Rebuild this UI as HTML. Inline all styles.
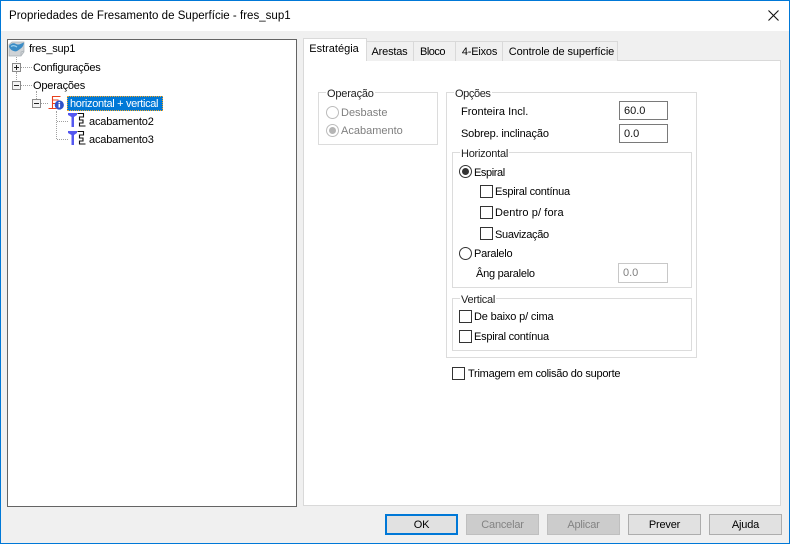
<!DOCTYPE html>
<html>
<head>
<meta charset="utf-8">
<style>
html,body{margin:0;padding:0;width:790px;height:544px;overflow:hidden;background:#f0f0f0;font-family:"Liberation Sans",sans-serif;font-size:11px;letter-spacing:-.2px;color:#000}
div,span,svg{position:absolute;box-sizing:border-box}
.t{white-space:nowrap;line-height:14px;height:14px;margin-top:1px}
.g{color:#7f7f7f}
.gb{border:1px solid #dcdcdc}
.l{background:#fff;padding:0 1px;white-space:nowrap;line-height:14px;height:14px;color:#222;margin-top:1px}
.tab{top:41px;height:20px;background:#f0f0f0;border:1px solid #d9d9d9;border-bottom:none;line-height:21px;text-align:center;white-space:nowrap}
.cb{width:13px;height:13px;background:#fff;border:1px solid #333}
.rd{width:13px;height:13px;border-radius:50%;background:#fff;border:1px solid #333}
.rd.dis{border-color:#bcbcbc}
.dot{width:7px;height:7px;left:2px;top:2px;border-radius:50%;background:#333}
.inp{background:#fff;border:1px solid #7a7a7a;line-height:19px;padding-left:4px;color:#111;letter-spacing:0}
.btn{top:514px;width:73px;height:21px;background:#e1e1e1;border:1px solid #adadad;text-align:center;line-height:21px}
.btn.dis{background:#ccc;border-color:#bfbfbf;color:#838383}
.dv{border-left:1px dotted #a0a0a0;width:1px}
.dh{border-top:1px dotted #a0a0a0;height:1px}
.exp{width:9px;height:9px;background:#f4f4f4;border:1px solid #8a8a8a}
.exp i{position:absolute;left:1px;top:3px;width:5px;height:1px;background:#222}
.exp b{position:absolute;left:3px;top:1px;width:1px;height:5px;background:#222}
</style>
</head>
<body>
<div style="left:0;top:0;width:790px;height:544px;border:1px solid #0078d7;background:#f0f0f0"></div>
<div style="left:1px;top:1px;width:788px;height:30px;background:#fff"></div>
<div class="t" style="left:9px;top:8px;font-size:11.5px;letter-spacing:.02px">Propriedades de Fresamento de Superfície - fres_sup1</div>
<svg style="left:768px;top:10px" width="11" height="11" viewBox="0 0 11 11"><path d="M.5.5l10 10M10.500.5l-10 10" stroke="#111" stroke-width="1.1" fill="none"/></svg>

<!-- tree -->
<div style="left:7px;top:39px;width:290px;height:468px;background:#fff;border:1px solid #646464"></div>
<svg style="left:8px;top:41px" width="17" height="16" viewBox="0 0 17 16">
<path d="M1 3.500L4 1h12v10l-3 4H1z" fill="#cfd3d6" stroke="#a9b0b5" stroke-width=".7"/>
<path d="M13 15V11l3-1" stroke="#a9b0b5" stroke-width=".7" fill="none"/>
<path d="M1 5C2.500 2.500 5.500 1.500 8 3c2.500 1.500 5-.5 8-1.500-.5 3-1.500 5-4 6.500-2 1.300-3 2.800-5.500 2.300C4 9.800 1.500 8 1 5z" fill="#3a8cc6"/>
<path d="M3 5.500c2-1.500 4-1 6 .5" stroke="#9bd0ee" stroke-width="1.200" fill="none"/>
</svg>
<div class="t" style="left:29px;top:41px;letter-spacing:-.25px">fres_sup1</div>
<div class="dv" style="left:16px;top:57px;height:7px"></div>
<div class="dv" style="left:16px;top:72px;height:10px"></div>
<div class="dh" style="left:21px;top:67px;width:11px"></div>
<div class="dh" style="left:21px;top:85px;width:11px"></div>
<div class="exp" style="left:12px;top:63px"><i></i><b></b></div>
<div class="exp" style="left:12px;top:81px"><i></i></div>
<div class="t" style="left:33px;top:60px;letter-spacing:-.27px">Configurações</div>
<div class="t" style="left:33px;top:78px">Operações</div>
<div class="dv" style="left:36px;top:91px;height:8px"></div>
<div class="dh" style="left:41px;top:103px;width:7px"></div>
<div class="exp" style="left:32px;top:99px"><i></i></div>
<svg style="left:48px;top:95px" width="18" height="16" viewBox="0 0 18 16">
<path d="M.5 13.500h8M4.500 13V1.500h8M4.500 5h6M4.500 8.500h7" stroke="#e8401c" stroke-width="1.100" fill="none"/>
<circle cx="11.300" cy="10" r="4.600" fill="#2f52c8"/><rect x="10.500" y="9" width="1.600" height="3.500" fill="#fff"/><rect x="10.500" y="7" width="1.600" height="1.300" fill="#fff"/>
</svg>
<div style="left:67px;top:96px;width:96px;height:15px;background:#0078d7;outline:1px dotted #f5a623;outline-offset:-1px"></div>
<div class="t" style="left:70px;top:96px;color:#fff;letter-spacing:-.33px">horizontal + vertical</div>
<div class="dv" style="left:56px;top:111px;height:28px"></div>
<div class="dh" style="left:57px;top:121px;width:11px"></div>
<div class="dh" style="left:57px;top:139px;width:11px"></div>
<svg style="left:68px;top:112px" width="19" height="16" viewBox="0 0 19 16">
<path d="M0 1h9v2L6 5V15H3.500V5L0 3z" fill="#5458f0"/>
<path d="M9.500 1.500h6v3.500h-4v3h3.500v3h-3.500v3h6" stroke="#111" stroke-width="1.100" fill="none"/>
</svg>
<svg style="left:68px;top:130px" width="19" height="16" viewBox="0 0 19 16">
<path d="M0 1h9v2L6 5V15H3.500V5L0 3z" fill="#5458f0"/>
<path d="M9.500 1.500h6v3.500h-4v3h3.500v3h-3.500v3h6" stroke="#111" stroke-width="1.100" fill="none"/>
</svg>
<div class="t" style="left:89px;top:114px;letter-spacing:-.18px">acabamento2</div>
<div class="t" style="left:89px;top:132px;letter-spacing:-.18px">acabamento3</div>

<!-- tabs -->
<div style="left:303px;top:60px;width:478px;height:446px;background:#fff;border:1px solid #d9d9d9"></div>
<div class="tab" style="left:366px;width:48px;padding-right:1px">Arestas</div>
<div class="tab" style="left:413px;width:43px;letter-spacing:-.5px;padding-right:4px">Bloco</div>
<div class="tab" style="left:455px;width:48px;padding-left:1px">4-Eixos</div>
<div class="tab" style="left:502px;width:116px;letter-spacing:-.1px;padding-left:3px">Controle de superfície</div>
<div class="tab" style="left:303px;top:38px;width:64px;height:23px;background:#fff;line-height:21px;letter-spacing:0;padding-right:2px">Estratégia</div>

<!-- Operacao -->
<div class="gb" style="left:318px;top:92px;width:120px;height:53px"></div>
<div class="l" style="left:326px;top:86px">Operação</div>
<div class="rd dis" style="left:326px;top:106px"></div>
<div class="t g" style="left:341px;top:105px;letter-spacing:0">Desbaste</div>
<div class="rd dis" style="left:326px;top:124px"><div class="dot" style="background:#b5b5b5"></div></div>
<div class="t g" style="left:341px;top:123px;letter-spacing:0">Acabamento</div>

<!-- Opcoes -->
<div class="gb" style="left:446px;top:92px;width:251px;height:266px"></div>
<div class="l" style="left:454px;top:86px;letter-spacing:-.4px">Opções</div>
<div class="t" style="left:461px;top:104px;letter-spacing:0">Fronteira Incl.</div>
<div class="inp" style="left:619px;top:101px;width:49px;height:19px">60.0</div>
<div class="t" style="left:461px;top:126px;letter-spacing:-.15px">Sobrep. inclinação</div>
<div class="inp" style="left:619px;top:124px;width:49px;height:19px">0.0</div>

<!-- Horizontal -->
<div class="gb" style="left:452px;top:152px;width:240px;height:136px"></div>
<div class="l" style="left:460px;top:146px;letter-spacing:-.25px">Horizontal</div>
<div class="rd" style="left:459px;top:165px"><div class="dot"></div></div>
<div class="t" style="left:474px;top:165px;letter-spacing:-.4px">Espiral</div>
<div class="cb" style="left:480px;top:185px"></div>
<div class="t" style="left:495px;top:184px;letter-spacing:-.25px">Espiral contínua</div>
<div class="cb" style="left:480px;top:206px"></div>
<div class="t" style="left:495px;top:205px;letter-spacing:.1px">Dentro p/ fora</div>
<div class="cb" style="left:480px;top:227px"></div>
<div class="t" style="left:495px;top:227px;letter-spacing:-.3px">Suavização</div>
<div class="rd" style="left:459px;top:247px"></div>
<div class="t" style="left:474px;top:246px;letter-spacing:-.25px">Paralelo</div>
<div class="t" style="left:476px;top:266px;letter-spacing:-.25px">Âng paralelo</div>
<div class="inp" style="left:618px;top:263px;width:50px;height:20px;border-color:#c8c8c8;color:#7f7f7f">0.0</div>

<!-- Vertical -->
<div class="gb" style="left:452px;top:298px;width:240px;height:53px"></div>
<div class="l" style="left:460px;top:292px;letter-spacing:-.25px">Vertical</div>
<div class="cb" style="left:459px;top:310px"></div>
<div class="t" style="left:474px;top:309px;letter-spacing:-.15px">De baixo p/ cima</div>
<div class="cb" style="left:459px;top:330px"></div>
<div class="t" style="left:474px;top:329px;letter-spacing:-.25px">Espiral contínua</div>

<div class="cb" style="left:452px;top:367px"></div>
<div class="t" style="left:468px;top:366px;letter-spacing:-.25px">Trimagem em colisão do suporte</div>

<!-- buttons -->
<div class="btn" style="left:385px;border:2px solid #0078d7;line-height:19px">OK</div>
<div class="btn dis" style="left:466px">Cancelar</div>
<div class="btn dis" style="left:547px">Aplicar</div>
<div class="btn" style="left:628px">Prever</div>
<div class="btn" style="left:709px">Ajuda</div>
</body>
</html>
